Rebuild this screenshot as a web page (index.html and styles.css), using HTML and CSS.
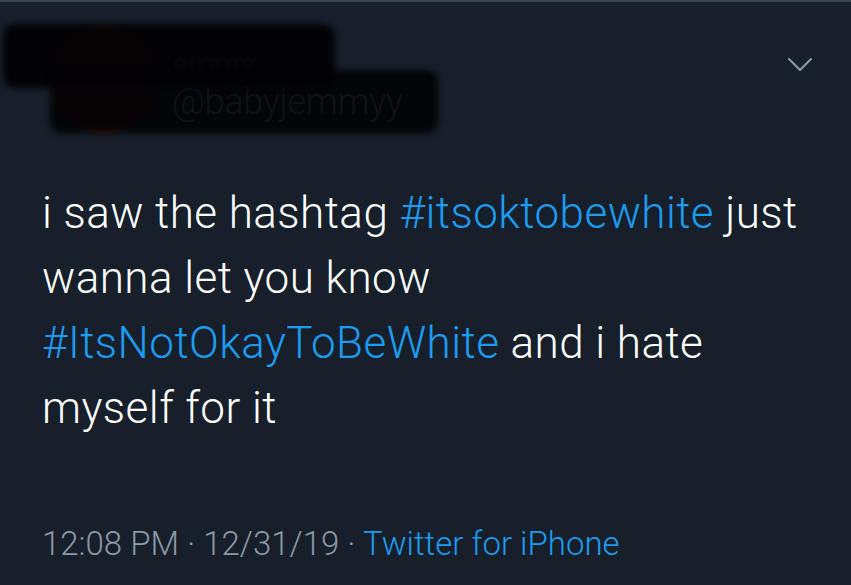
FILE: index.html
```html
<!DOCTYPE html>
<html>
<head>
<meta charset="utf-8">
<link rel="stylesheet" href="styles.css">
</head>
<body>
<div class="tweet">
  <div class="header">
    <div class="avatar"></div>
    <div class="names">
      <div class="name">emmy</div>
      <div class="handle">@babyjemmyy</div>
    </div>
    <div class="redact r1"></div>
    <div class="redact r2"></div>
    <svg class="chevron" width="26" height="16" viewBox="0 0 26 16"><path d="M2 2 L13 13 L24 2" fill="none" stroke="#8b98a5" stroke-width="2.2" stroke-linecap="round" stroke-linejoin="round"/></svg>
  </div>
  <div class="text">i saw the hashtag <span class="tag">#itsoktobewhite</span> just wanna let you know <span class="tag">#ItsNotOkayToBeWhite</span> and i hate myself for it</div>
  <div class="meta">12:08 PM · 12/31/19 · <span class="src">Twitter for iPhone</span></div>
</div>
</body>
</html>
```
FILE: styles.css
```css
html, body {
  margin: 0;
  padding: 0;
  background: #161f2a;
}
body {
  width: 851px;
  height: 585px;
  overflow: hidden;
  font-family: Roboto, "Liberation Sans", sans-serif;
}
.tweet {
  border-top: 2px solid #3a444f;
  height: 583px;
  box-sizing: border-box;
  padding: 0 42px;
  display: flex;
  flex-direction: column;
}
.header {
  position: relative;
  height: 179px;
  flex: none;
  display: flex;
  align-items: flex-start;
  padding-top: 24px;
  box-sizing: border-box;
  margin-left: -42px;
  margin-right: -42px;
  padding-left: 50px;
}
.avatar {
  width: 108px;
  height: 108px;
  border-radius: 50%;
  background: #3e1c10;
  flex: none;
}
.names {
  margin-left: 14px;
  padding-top: 20px;
  color: #8b98a5;
}
.name {
  font-size: 30px;
  font-weight: 700;
  color: #555555;
  line-height: 36px;
}
.handle {
  font-size: 36px;
  font-weight: 300;
  line-height: 40px;
  letter-spacing: -0.3px;
}
.redact {
  position: absolute;
  border-radius: 12px;
  filter: blur(3px);
}
.r1 {
  left: 3px;
  top: 22px;
  width: 332px;
  height: 64px;
  background: rgba(2, 2, 4, 0.95);
}
.r2 {
  left: 50px;
  top: 68px;
  width: 388px;
  height: 63px;
  background: rgba(2, 2, 4, 0.9);
}
.chevron {
  position: absolute;
  right: 38px;
  top: 55px;
}
.text {
  color: #ffffff;
  font-size: 44px;
  font-weight: 300;
  line-height: 65px;
  letter-spacing: 0.45px;
  width: 775px;
}
.tag, .src {
  color: #1d9bf0;
}
.meta {
  margin-top: 83px;
  font-size: 33px;
  font-weight: 300;
  line-height: 40px;
  color: #8b98a5;
}
```
